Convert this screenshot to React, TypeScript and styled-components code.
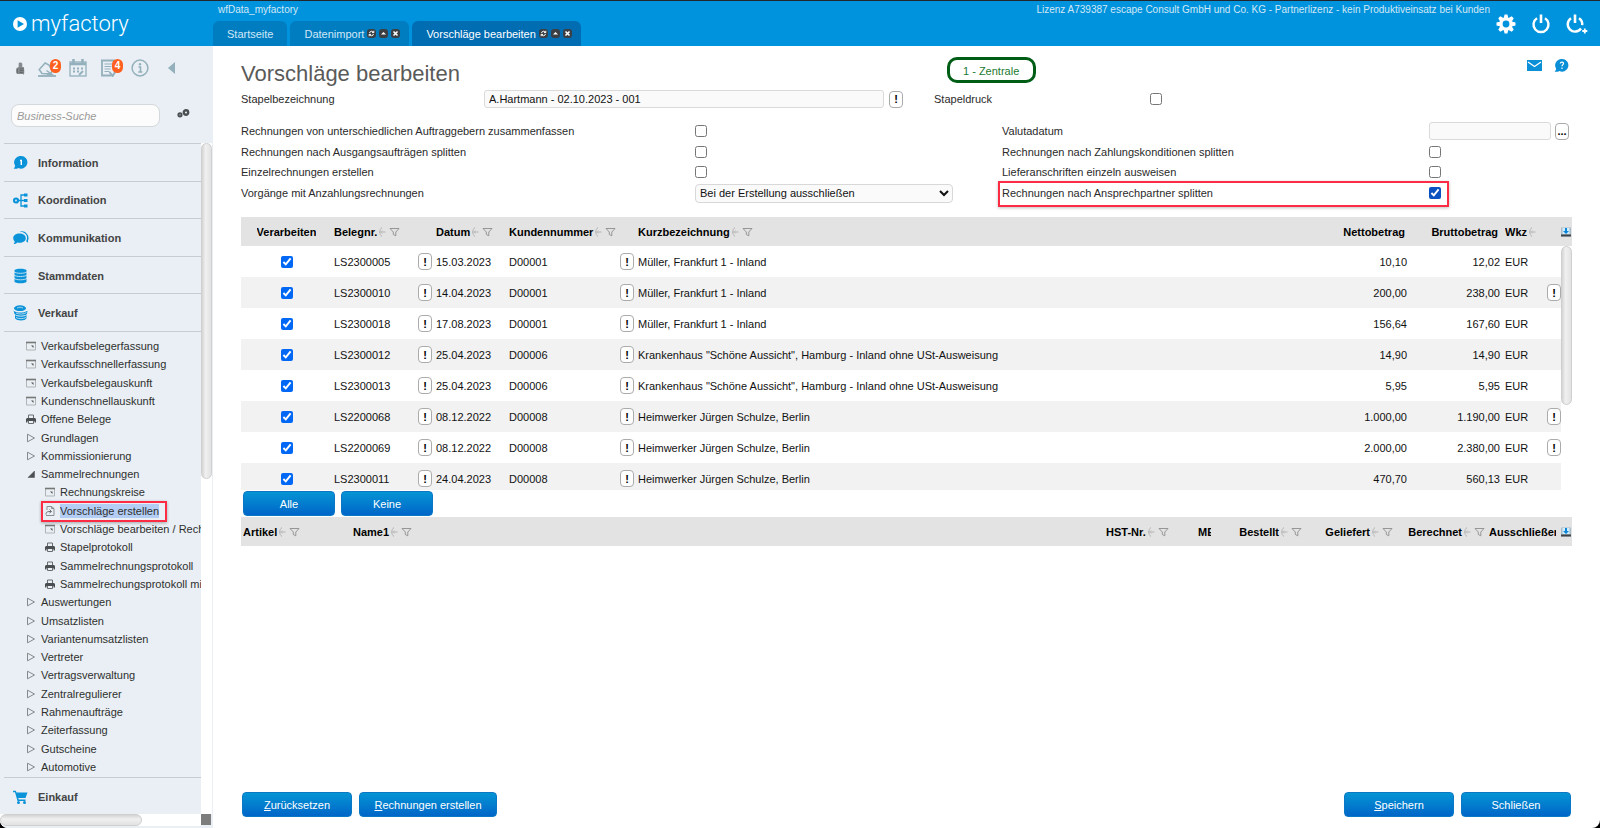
import React from "react";
import styled, { createGlobalStyle, css } from "styled-components";

const GlobalStyle = createGlobalStyle`
  *, *::before, *::after { box-sizing: border-box; }
  html, body { margin: 0; padding: 0; background: #000; }
  body, button, input, select {
    font-family: "Liberation Sans", Arial, Helvetica, sans-serif;
    font-size: 11px;
    line-height: 14px;
  }
  body { color: #2a2a2a; }
  button { cursor: pointer; }
`;

/* ---------- page frame ---------- */

const Page = styled.div`
  display: flex;
  flex-direction: column;
  height: 100vh;
  overflow: hidden;
  border-radius: 0 0 8px 8px;
  background: #fff;
`;

const Header = styled.header`
  display: flex;
  flex: none;
  height: 46px;
  border-top: 1px solid #23272b;
  background: #0093dd;
  color: #d3e8f6;
`;

const Logo = styled.a`
  display: flex;
  flex: none;
  align-items: center;
  gap: 4px;
  width: 213px;
  height: 45px;
  padding-left: 13px;
  color: #fff;
  text-decoration: none;
  font: 300 22px/26px Roboto, "Open Sans", sans-serif;
`;

const HeaderMain = styled.div`
  display: flex;
  flex: 1;
  flex-direction: column;
  justify-content: space-between;
`;

const HeaderLine = styled.div`
  display: flex;
  justify-content: space-between;
  padding: 2px 0 0 5px;
  font-size: 10px;
`;

const Tabs = styled.nav`
  display: flex;
  gap: 3px;
`;

const Tab = styled.a<{ $active?: boolean; $fixed?: boolean }>`
  display: flex;
  align-items: center;
  gap: 3px;
  height: 25px;
  padding: 0 ${(p) => (p.$fixed ? 14 : 9)}px 0 14px;
  border-radius: 6px 6px 0 0;
  background: ${(p) => (p.$active ? "#006cb2" : "#007dc1")};
  color: ${(p) => (p.$active ? "#fff" : "#d3e8f6")};
  text-decoration: none;
`;

const TabIcons = styled.span`
  display: flex;
  gap: 3px;
`;

const HeaderActions = styled.div`
  display: flex;
  flex: none;
  align-items: center;
  gap: 15px;
  padding: 1px 12px 0 6px;
`;

const IconButton = styled.button`
  display: flex;
  align-items: center;
  justify-content: center;
  padding: 0;
  border: 0;
  background: none;
  color: inherit;
`;

const Body = styled.div`
  display: flex;
  flex: 1;
  min-height: 0;
`;

/* ---------- sidebar ---------- */

const Sidebar = styled.aside`
  display: flex;
  flex: none;
  flex-direction: column;
  width: 213px;
  background: #e9eff4;
`;

const ToolRow = styled.div`
  display: flex;
  align-items: center;
  gap: 13px;
  height: 44px;
  padding-left: 15px;
  color: #93b0bc;
`;

const Tool = styled(IconButton)`
  position: relative;
`;

const CollapseTool = styled(Tool)`
  padding-left: 6px;
`;

const Badge = styled.span`
  position: absolute;
  top: 0;
  right: -5px;
  width: 11px;
  height: 14px;
  border-radius: 6px;
  background: #ff5f1f;
  color: #fff;
  font-size: 10px;
  font-weight: bold;
  line-height: 14px;
  text-align: center;
`;

const SearchRow = styled.div`
  display: flex;
  align-items: flex-start;
  gap: 17px;
  height: 53px;
  padding: 14px 0 0 11px;
  color: #4b4f52;
`;

const SearchOptions = styled(IconButton)`
  height: 18px;
`;

const SearchInput = styled.input`
  width: 149px;
  height: 23px;
  padding: 0 5px;
  border: 1px solid #d5d8da;
  border-radius: 8px;
  background: #fcfcfc;
  &::placeholder { color: #9a9a9a; font-style: italic; opacity: 1; }
`;

const ScrollRegion = styled.div`
  display: flex;
  flex: 1;
  min-height: 0;
`;

const MenuArea = styled.nav`
  width: 201px;
  padding-left: 4px;
  overflow: hidden;
`;

const MenuGroups = styled.div`
  display: grid;
  grid-auto-rows: 1fr;
  height: 188px;
`;

const MenuGroup = styled.a`
  display: grid;
  grid-template-columns: 16px auto;
  justify-content: start;
  align-items: center;
  gap: 9px;
  min-height: 37px;
  padding: 1px 0 0 9px;
  border-top: 1px solid #c8ccd0;
  color: #444;
  font-weight: bold;
  text-decoration: none;
  svg { color: #0b93da; }
`;

const Tree = styled.ul`
  display: grid;
  grid-auto-rows: 1fr;
  height: 446px;
  margin: 0;
  padding: 5px 0 1px;
  border-top: 1px solid #c8ccd0;
  list-style: none;
`;

const TreeItem = styled.li<{ $level: number; $marked?: boolean }>`
  position: relative;
  display: flex;
  align-items: center;
  padding-left: ${(p) => (p.$level === 2 ? 41 : 22)}px;
  white-space: nowrap;
  ${(p) =>
    p.$marked &&
    css`
      &::after {
        content: "";
        position: absolute;
        top: -1px;
        left: 37px;
        width: 126px;
        height: 21px;
        border: 2px solid #fb2c43;
        box-shadow: 0 1px 3px rgba(0, 0, 0, 0.3);
        pointer-events: none;
      }
    `}
`;

const TreeLink = styled.a<{ $selected?: boolean }>`
  display: flex;
  align-items: center;
  gap: 5px;
  color: #2f2f2f;
  text-decoration: none;
  span { background: ${(p) => (p.$selected ? "#b3cdf4" : "none")}; }
  svg { color: #6a6d70; }
`;

const Track = styled.div`
  width: 11px;
  background: #fff;
`;

const Thumb = styled.div<{ $horizontal?: boolean }>`
  width: ${(p) => (p.$horizontal ? "142px" : "11px")};
  height: ${(p) => (p.$horizontal ? "12px" : "50%")};
  border: 1px solid #cfcfcf;
  border-radius: 6px;
  background: ${(p) =>
    p.$horizontal
      ? "linear-gradient(#d4d4d4, #f0f0f0 40%, #e2e2e2)"
      : "linear-gradient(90deg, #d4d4d4, #f0f0f0 40%, #e2e2e2)"};
`;

const BottomTrack = styled.div`
  display: flex;
  justify-content: space-between;
  height: 14px;
  padding-right: 2px;
  background: linear-gradient(#fff, #fff) no-repeat 0 0 / 201px 12px;
`;

const TrackCorner = styled.div`
  width: 10px;
  height: 11px;
  background: #7d7d7d;
`;

/* ---------- main panel ---------- */

const Main = styled.main`
  display: flex;
  flex: 1;
  flex-direction: column;
  min-width: 0;
  padding: 11px 28px 11px;
`;

const TitleRow = styled.div`
  display: grid;
  grid-template-columns: 706px auto 1fr;
  height: 31px;
`;

const Title = styled.h1`
  margin: 3px 0 0;
  color: #5a5a5a;
  font-size: 22px;
  font-weight: normal;
  line-height: 28px;
`;

const SiteBadge = styled.span`
  height: 26px;
  padding: 1px 14px 0 13px;
  border: 3px solid #005d16;
  border-radius: 10px;
  color: #1c7a30;
  line-height: 20px;
`;

const TitleActions = styled.div`
  display: flex;
  gap: 12px;
  justify-content: flex-end;
  height: 17px;
  padding-right: 3px;
  color: #0b8fd6;
`;

const TopFields = styled.div`
  display: grid;
  grid-template-columns: 243px 400px 50px 216px 1fr;
  align-items: center;
  height: 22px;
`;

const Options = styled.div`
  display: grid;
  grid-template-columns: 454px 307px 427px 1fr;
  grid-template-rows: 22px 20px 20px 22px;
  align-items: center;
  margin: 10px 0 13px;
`;

const FieldButtonSlot = styled.div`
  display: flex;
  padding-left: 5px;
`;

const Inline = styled.div`
  display: flex;
  align-items: center;
  gap: 4px;
`;

const TextInput = styled.input`
  width: 100%;
  min-width: 0;
  height: 18px;
  padding: 0 4px;
  border: 1px solid #dadada;
  border-radius: 3px;
  background: #fafafa;
  color: #111;
`;

const DateInput = styled(TextInput)`
  width: 122px;
`;

const Select = styled.select`
  width: 258px;
  height: 19px;
  padding: 0;
  border: 1px solid #d8d8d8;
  border-radius: 4px;
  background: #fafafa;
  color: #111;
`;

const Check = styled.input<{ $hovered?: boolean }>`
  display: block;
  width: 12px;
  height: 12px;
  margin: 0;
  accent-color: ${(p) => (p.$hovered ? "#0a50c0" : "#0068f5")};
`;

const MarkFrame = styled.div`
  position: relative;
  display: grid;
  grid-column: 3 / 5;
  grid-template-columns: 427px 1fr;
  align-items: center;
  &::after {
    content: "";
    position: absolute;
    top: -5px;
    left: -4px;
    width: 451px;
    height: 26px;
    border: 2px solid #fb2c43;
    box-shadow: 0 1px 3px rgba(0, 0, 0, 0.25);
    pointer-events: none;
  }
`;

const SmallButton = styled.button`
  width: 14px;
  height: 17px;
  padding: 0;
  border: 1px solid #ababab;
  border-radius: 4px;
  background: #fff;
  color: #000;
  font-weight: bold;
  line-height: 14px;
  text-align: center;
  vertical-align: middle;
`;

/* ---------- tables ---------- */

const TableView = styled.div<{ $rows?: boolean }>`
  position: relative;
  flex: none;
  height: ${(p) => (p.$rows ? "273px" : "29px")};
  overflow: hidden;
`;

const Table = styled.table`
  width: 100%;
  border-collapse: collapse;
  table-layout: fixed;
  color: #111;
`;

const Th = styled.th<{ $align?: string; $right?: number }>`
  height: 29px;
  padding: 0 ${(p) => p.$right || 2}px 0 2px;
  overflow: hidden;
  background: #e3e3e3;
  color: #000;
  text-align: ${(p) => p.$align || "left"};
  white-space: nowrap;
`;

const IconCell = styled.td`
  padding: 0;
  background: #e3e3e3;
`;

const HeadLabel = styled.span`
  display: inline-flex;
  align-items: center;
  max-width: 100%;
  overflow: hidden;
  vertical-align: middle;
  svg { flex: none; }
`;

const Row = styled.tr`
  &:nth-child(even) td:not(:last-child) { background: #f2f2f2; }
`;

const Td = styled.td<{ $align?: string }>`
  height: 31px;
  padding: 0 ${(p) => (p.$align === "right" ? 3 : 2)}px 0 2px;
  text-align: ${(p) => p.$align || "left"};
  white-space: nowrap;
`;

const CheckCell = styled(Td)`
  input { margin: 0 auto; }
`;

const NoteCell = styled(Td)`
  padding: 0;
  text-align: right;
`;

const CellSplit = styled.div`
  display: flex;
  align-items: center;
  justify-content: space-between;
`;

const TableThumb = styled(Thumb)`
  position: absolute;
  top: 29px;
  right: 0;
  height: 159px;
`;

/* ---------- action buttons ---------- */

const ButtonBar = styled.div`
  display: flex;
  gap: 6px;
  padding: 1px 1px 1px 2px;
`;

const FooterBar = styled.div`
  display: flex;
  gap: 7px;
  margin-top: auto;
  padding: 0 1px;
`;

const Spacer = styled.span`
  flex: 1;
`;

const ActionButton = styled.button<{ $width: number }>`
  width: ${(p) => p.$width}px;
  height: 25px;
  padding: 0;
  border: 1px solid #0a78c4;
  border-radius: 4px;
  background: linear-gradient(#0594d4, #0066c8);
  color: #fff;
`;

/* ---------- icons ---------- */

const PlayLogo = () => (
  <svg width="14" height="14" viewBox="0 0 14 14" aria-hidden="true">
    <circle cx="7" cy="7" r="7" fill="#fff" />
    <path d="M4.6 3.2 11 7l-6.4 3.8z" fill="#0093dd" />
  </svg>
);

const TabIcon = ({ kind }: { kind: "reload" | "up" | "close" }) => (
  <svg width="9" height="9" viewBox="0 0 9 9" aria-hidden="true">
    <rect width="9" height="9" rx="3" fill="#3b3f43" />
    {kind === "reload" && (
      <path d="M6.6 3.4A2.2 2.2 0 0 0 2.5 4M2.4 5.6A2.2 2.2 0 0 0 6.5 5M6.800 1.800v1.800H5M2.200 7.200V5.400H4" stroke="#fff" fill="none" />
    )}
    {kind === "up" && <path d="M2 5.600h5L4.500 3z" fill="#fff" />}
    {kind === "close" && <path d="m2.500 2.500 4 4m0-4-4 4" stroke="#fff" strokeWidth="1.6" />}
  </svg>
);

const GearIcon = () => (
  <svg width="20" height="20" viewBox="0 0 20 20" aria-hidden="true">
    <g fill="#fff">
      {[0, 45, 90, 135].map((a) => (
        <path key={a} d="M8.600 .5h2.800l1.100 4v11l-1.100 4H8.600l-1.100-4v-11z" transform={`rotate(${a} 10 10)`} />
      ))}
      <circle cx="10" cy="10" r="6.500" />
    </g>
    <circle cx="10" cy="10" r="3.400" fill="#0093dd" />
  </svg>
);

const PowerIcon = ({ plus }: { plus?: boolean }) => (
  <svg width={plus ? 22 : 20} height="20" viewBox={plus ? "0 0 22 20" : "0 0 20 20"} fill="none" stroke="#fff" aria-hidden="true">
    <path d={plus ? "M5 4.200a7.300 7.300 0 1 0 10 10.300M13 4.200a7.300 7.300 0 0 1 3.200 7" : "M6 4.200a7.500 7.500 0 1 0 8 0"} strokeWidth="2.400" />
    <path d={plus ? "M9 .5v8.500" : "M10 .5v8.500"} strokeWidth="2.600" />
    {plus && <path d="M18.800 14.500v5M16.300 17h5" strokeWidth="1.800" />}
  </svg>
);

const ThumbUpIcon = () => (
  <svg width="10" height="14" viewBox="0 0 11 14" aria-hidden="true">
    <path d="M4 6V2.200C4 .4 8 .4 8 2.600V6h1.500c1 .4 1 12-.5 7.500H2.500C1 13.500 1 8 2 7z" fill="#858a8e" />
    <path d="M2.500 7.500v5M5 8h4.500M5 10h4.500M5 12h4" stroke="#5d6266" />
  </svg>
);

const StampIcon = () => (
  <svg width="18" height="18" viewBox="0 0 18 18" fill="none" stroke="currentColor" aria-hidden="true">
    <path d="M0 17h18" strokeWidth="1.800" />
    <path d="M4 14.500 1.200 10.500l6-6.500L11 6l3.500 6-2.500 3z" strokeWidth="1.500" />
    <path d="M8.500 11.500 14 15.500H9" strokeWidth="1.500" />
  </svg>
);

const CalendarIcon = () => (
  <svg width="18" height="18" viewBox="0 0 18 18" fill="none" stroke="currentColor" aria-hidden="true">
    <rect x="1" y="3" width="16" height="14" strokeWidth="1.300" />
    <path d="M1 5h16M4.500 0v5M13.500 0v5" strokeWidth="2.500" />
    <path d="M4 9.500h2M8 9.500h2M12 9.500h2M4 12.500h2M8 12.500h2" strokeWidth="1.800" />
    <path d="m10 16 4-4" strokeWidth="1.800" />
  </svg>
);

const TaskIcon = () => (
  <svg width="18" height="18" viewBox="0 0 18 18" fill="none" stroke="currentColor" aria-hidden="true">
    <path d="M2 1v15.500h9M1 1.500h13V10" strokeWidth="1.800" />
    <path d="M4.500 5h8M4.500 7.500h7M4.500 10h6M4.500 12.500h5" strokeWidth="1.200" />
    <path d="m9.500 13 3 4 4-6" strokeWidth="2" />
  </svg>
);

const InfoCircleIcon = () => (
  <svg width="18" height="18" viewBox="0 0 18 18" fill="none" stroke="currentColor" aria-hidden="true">
    <circle cx="9" cy="9" r="7.900" strokeWidth="1.500" />
    <path d="M7.500 8H9.500v5M7.300 13h4" strokeWidth="1.600" />
    <circle cx="9" cy="5.200" r="1.200" fill="currentColor" stroke="none" />
  </svg>
);

const CollapseIcon = () => (
  <svg width="7" height="12" viewBox="0 0 7 12" aria-hidden="true">
    <path d="M7 0v12L0 6z" fill="currentColor" />
  </svg>
);

const GearsIcon = () => (
  <svg width="13" height="9" viewBox="0 0 13 9" fill="none" stroke="currentColor" aria-hidden="true">
    <circle cx="9" cy="3.500" r="2.200" strokeWidth="2.400" />
    <circle cx="3" cy="5.800" r="1.600" strokeWidth="2" />
  </svg>
);

const InfoBubble = ({ help }: { help?: boolean }) => (
  <svg width="15" height="14" viewBox="0 0 15 14" aria-hidden="true">
    <path d="M8 0a6.300 6.300 0 1 1-2.600 12C4 13 2 13 .5 12.600c1-.8 1.500-1.600 1.600-3A6.300 6.300 0 0 1 8 0z" fill="currentColor" />
    {help ? (
      <path d="M6.300 4.500c.2-2 3.400-1.800 3.200 0C9.400 5.600 8 5.700 8 7.300M8 8.500V10" stroke="#fff" strokeWidth="1.200" fill="none" />
    ) : (
      <path d="M7 4.500h1.300V9" stroke="#fff" strokeWidth="1.400" fill="none" />
    )}
  </svg>
);

const OrgIcon = () => (
  <svg width="15" height="15" viewBox="0 0 15 15" fill="none" stroke="currentColor" aria-hidden="true">
    <circle cx="3" cy="7.500" r="2" strokeWidth="2.200" />
    <path d="M5 7.500h6M12 2H8v11h4" strokeWidth="1.300" />
    <path d="M11 2h3.500M11 7.500h3.500M11 13h3.500" strokeWidth="3.200" />
  </svg>
);

const ChatIcon = () => (
  <svg width="16" height="14" viewBox="0 0 16 14" fill="currentColor" aria-hidden="true">
    <path d="M6.500 2.500c3.600 0 6.300 2 6.300 4.700s-2.700 4.600-6.300 4.600c-.8 0-1.500-.1-2.200-.3-1 1-2.300 1.500-3.600 1.500.6-.7 1-1.500 1-2.500A4.400 4.400 0 0 1 .2 7.200c0-2.700 2.700-4.700 6.300-4.700z" />
    <path d="M6.500 1C11 .3 14.300 3.300 14 7.200c0 1.200-.5 2.200-1 3 1.200 1 1.800 1.200 2.300 1.300-.3-.6-.4-1-.4-1.600C17.500 4.600 11.500-2 6.500 1z" />
  </svg>
);

const DatabaseIcon = () => (
  <svg width="15" height="16" viewBox="0 0 15 16" aria-hidden="true">
    <path d="M1.500 2.500c0-2.300 12-2.300 12 0v11c0 2.400-12 2.400-12 0z" fill="currentColor" />
    <path d="M1 3.800c2 2 11 2 13 0M1 7c2 2 11 2 13 0M1 10.300c2 2 11 2 13 0" stroke="#e9eff4" strokeWidth=".8" fill="none" />
  </svg>
);

const CoinsIcon = () => (
  <svg width="15" height="16" viewBox="0 0 15 16" aria-hidden="true">
    <ellipse cx="7" cy="3.200" rx="6" ry="2.900" fill="currentColor" />
    <path d="M.5 5.500c2.500 2.600 10 2.800 14 .2L14 9c-2 2.200-10 2.300-12.500 0zM2 10c3 2 9 2 11.500 0v3.300c-1.500 3-9.500 3-11.500 0z" fill="currentColor" />
    <path d="M4 3.200c1-1.300 5-1.300 6 0M3 8c3 1.500 8 1.500 10.500-.5M3 12.500c3 1.500 7 1.500 10 0" stroke="#e9eff4" strokeWidth=".7" fill="none" />
  </svg>
);

const CartIcon = () => (
  <svg width="15" height="14" viewBox="0 0 15 14" aria-hidden="true">
    <path d="M0 .8h2.800l.7 1.700H14.500L12.500 8H5.200l.6 1.500h6.700V11H4.500L2 2.300H0z" fill="currentColor" />
    <circle cx="5.500" cy="12.500" r="1.500" fill="currentColor" />
    <circle cx="11.500" cy="12.500" r="1.500" fill="currentColor" />
  </svg>
);

const MailIcon = () => (
  <svg width="15" height="11" viewBox="0 0 15 11" aria-hidden="true">
    <rect width="15" height="11" fill="currentColor" />
    <path d="m1 2 6.500 4.500L14 2" stroke="#fff" strokeWidth="1.300" fill="none" />
  </svg>
);

type TreeKind = "form" | "print" | "closed" | "open" | "doc";

const TreeIcon = ({ kind }: { kind: TreeKind }) => (
  <svg width="10" height="10" viewBox="0 0 10 10" fill="none" stroke="currentColor" aria-hidden="true">
    {kind === "form" && (
      <>
        <path d="M.5 2v7h9V2" stroke="#b0b4b7" />
        <path d="M0 1.500h10" stroke="#777" strokeWidth="1.600" />
        <path d="M5 4.500h2.500V7z" fill="#555" stroke="none" />
      </>
    )}
    {kind === "print" && (
      <>
        <path d="M2.500 4V1h5v3" />
        <path d="M1 4h8l1 1v3.500H8.500V7h-7v1.500H0V5z" fill="#4c4f52" stroke="none" />
        <path d="M2.500 7v2.500h5V7" />
      </>
    )}
    {kind === "closed" && <path d="M1.500 1.200v7.600L8.500 5z" stroke="#85898c" />}
    {kind === "open" && <path d="M8.500 2V8.500H2z" fill="#4c4f52" stroke="#4c4f52" strokeWidth=".5" />}
    {kind === "doc" && (
      <>
        <path d="M2 4V.5h4.500l2.500 2v7H1M6.500.5v2H9" stroke="#8b8f92" />
        <path d="M1 8.500c0-3 2-3 5-3M4.500 3.500l2 2-2 1.500" />
      </>
    )}
  </svg>
);

const SortFilter = ({ part }: { part?: boolean }) => (
  <svg width={part ? 14 : 23} height="11" viewBox={part ? "0 0 14 11" : "0 0 23 11"} fill="none" aria-hidden="true">
    <path d="M5 .5C2 2.500 2 7.500 5 9.500M2.500 5h6" stroke="#b4b4b4" />
    <path d="M3 5 5.500 3v4z" fill="#c4c4c4" />
    {part ? (
      <path d="M12 1.500h1.500" stroke="#999" />
    ) : (
      <path d="M13 1.500h9L18.800 5v3.800l-2.500-1.300V5z" stroke="#969696" />
    )}
  </svg>
);

const ExportIcon = () => (
  <svg width="10" height="10" viewBox="0 0 10 10" aria-hidden="true">
    <rect y=".5" width="10" height="9" fill="#a9bcc8" />
    <path d="M0 7.500h10v2H0z" fill="#3e4448" />
    <path d="M1.500 1h7v6h-7z" fill="#d5edf9" />
    <path d="M4 1h2v3h2L5 7 2 4h2z" fill="#0a86d8" />
  </svg>
);

/* ---------- data ---------- */

const groups = [
  { label: "Information", icon: <InfoBubble /> },
  { label: "Koordination", icon: <OrgIcon /> },
  { label: "Kommunikation", icon: <ChatIcon /> },
  { label: "Stammdaten", icon: <DatabaseIcon /> },
  { label: "Verkauf", icon: <CoinsIcon /> },
];

const tree: { label: string; kind: TreeKind; level?: number; selected?: boolean }[] = [
  { label: "Verkaufsbelegerfassung", kind: "form" },
  { label: "Verkaufsschnellerfassung", kind: "form" },
  { label: "Verkaufsbelegauskunft", kind: "form" },
  { label: "Kundenschnellauskunft", kind: "form" },
  { label: "Offene Belege", kind: "print" },
  { label: "Grundlagen", kind: "closed" },
  { label: "Kommissionierung", kind: "closed" },
  { label: "Sammelrechnungen", kind: "open" },
  { label: "Rechnungskreise", kind: "form", level: 2 },
  { label: "Vorschläge erstellen", kind: "doc", level: 2, selected: true },
  { label: "Vorschläge bearbeiten / Rechnungen", kind: "form", level: 2 },
  { label: "Stapelprotokoll", kind: "print", level: 2 },
  { label: "Sammelrechnungsprotokoll", kind: "print", level: 2 },
  { label: "Sammelrechungsprotokoll mit", kind: "print", level: 2 },
  { label: "Auswertungen", kind: "closed" },
  { label: "Umsatzlisten", kind: "closed" },
  { label: "Variantenumsatzlisten", kind: "closed" },
  { label: "Vertreter", kind: "closed" },
  { label: "Vertragsverwaltung", kind: "closed" },
  { label: "Zentralregulierer", kind: "closed" },
  { label: "Rahmenaufträge", kind: "closed" },
  { label: "Zeiterfassung", kind: "closed" },
  { label: "Gutscheine", kind: "closed" },
  { label: "Automotive", kind: "closed" },
];

const records = [
  { nr: "LS2300005", date: "15.03.2023", customer: "D00001", name: "Müller, Frankfurt 1 - Inland", net: "10,10", gross: "12,02" },
  { nr: "LS2300010", date: "14.04.2023", customer: "D00001", name: "Müller, Frankfurt 1 - Inland", net: "200,00", gross: "238,00", note: true },
  { nr: "LS2300018", date: "17.08.2023", customer: "D00001", name: "Müller, Frankfurt 1 - Inland", net: "156,64", gross: "167,60" },
  { nr: "LS2300012", date: "25.04.2023", customer: "D00006", name: 'Krankenhaus "Schöne Aussicht", Hamburg - Inland ohne USt-Ausweisung', net: "14,90", gross: "14,90" },
  { nr: "LS2300013", date: "25.04.2023", customer: "D00006", name: 'Krankenhaus "Schöne Aussicht", Hamburg - Inland ohne USt-Ausweisung', net: "5,95", gross: "5,95" },
  { nr: "LS2200068", date: "08.12.2022", customer: "D00008", name: "Heimwerker Jürgen Schulze, Berlin", net: "1.000,00", gross: "1.190,00", note: true },
  { nr: "LS2200069", date: "08.12.2022", customer: "D00008", name: "Heimwerker Jürgen Schulze, Berlin", net: "2.000,00", gross: "2.380,00", note: true },
  { nr: "LS2300011", date: "24.04.2023", customer: "D00008", name: "Heimwerker Jürgen Schulze, Berlin", net: "470,70", gross: "560,13" },
];

const Columns = ({ widths }: { widths: (number | undefined)[] }) => (
  <colgroup>
    {widths.map((w, i) => (
      <col key={i} width={w} />
    ))}
  </colgroup>
);

type HeadCellProps = { label: string; align?: string; sort?: "full" | "part" };

const HeadCell = ({ label, align, sort }: HeadCellProps) => (
  <Th $align={align} $right={align === "right" && !sort ? 5 : 2} scope="col">
    <HeadLabel>
      {label}
      {sort && <SortFilter part={sort === "part"} />}
    </HeadLabel>
  </Th>
);

const ExportCell = () => (
  <IconCell>
    <IconButton aria-label="Exportieren"><ExportIcon /></IconButton>
  </IconCell>
);

/* ---------- sections ---------- */

const TabControls = () => (
  <TabIcons>
    <TabIcon kind="reload" />
    <TabIcon kind="up" />
    <TabIcon kind="close" />
  </TabIcons>
);

const AppHeader = () => (
  <Header>
    <Logo href="#"><PlayLogo />myfactory</Logo>
    <HeaderMain>
      <HeaderLine>
        <span>wfData_myfactory</span>
        <span>Lizenz A739387 escape Consult GmbH und Co. KG - Partnerlizenz - kein Produktiveinsatz bei Kunden</span>
      </HeaderLine>
      <Tabs>
        <Tab href="#" $fixed>Startseite</Tab>
        <Tab href="#">Datenimport<TabControls /></Tab>
        <Tab href="#" $active>Vorschläge bearbeiten<TabControls /></Tab>
      </Tabs>
    </HeaderMain>
    <HeaderActions>
      <IconButton aria-label="Einstellungen"><GearIcon /></IconButton>
      <IconButton aria-label="Abmelden"><PowerIcon /></IconButton>
      <IconButton aria-label="Neu anmelden"><PowerIcon plus /></IconButton>
    </HeaderActions>
  </Header>
);

const AppSidebar = () => (
  <Sidebar>
    <ToolRow>
      <Tool aria-label="Bewerten"><ThumbUpIcon /></Tool>
      <Tool aria-label="Stempel"><StampIcon /><Badge>2</Badge></Tool>
      <Tool aria-label="Kalender"><CalendarIcon /></Tool>
      <Tool aria-label="Aufgaben"><TaskIcon /><Badge>4</Badge></Tool>
      <Tool aria-label="Info"><InfoCircleIcon /></Tool>
      <CollapseTool aria-label="Einklappen"><CollapseIcon /></CollapseTool>
    </ToolRow>
    <SearchRow>
      <SearchInput placeholder="Business-Suche" aria-label="Business-Suche" />
      <SearchOptions aria-label="Suchoptionen"><GearsIcon /></SearchOptions>
    </SearchRow>
    <ScrollRegion>
      <MenuArea>
        <MenuGroups>
          {groups.map((g) => (
            <MenuGroup href="#" key={g.label}>{g.icon}<span>{g.label}</span></MenuGroup>
          ))}
        </MenuGroups>
        <Tree>
          {tree.map((t) => (
            <TreeItem key={t.label} $level={t.level || 1} $marked={t.selected}>
              <TreeLink href="#" $selected={t.selected}>
                <TreeIcon kind={t.kind} />
                <span>{t.label}</span>
              </TreeLink>
            </TreeItem>
          ))}
        </Tree>
        <MenuGroup href="#"><CartIcon /><span>Einkauf</span></MenuGroup>
      </MenuArea>
      <Track><Thumb /></Track>
    </ScrollRegion>
    <BottomTrack><Thumb $horizontal /><TrackCorner /></BottomTrack>
  </Sidebar>
);

const RecordTable = () => (
  <TableView $rows>
    <Table>
      <Columns widths={[91, 102, 73, 129, undefined, 91, 93, 38, 20, 11]} />
      <thead>
        <tr>
          <HeadCell label="Verarbeiten" align="center" />
          <HeadCell label="Belegnr." sort="full" />
          <HeadCell label="Datum" sort="full" />
          <HeadCell label="Kundennummer" sort="full" />
          <HeadCell label="Kurzbezeichnung" sort="full" />
          <HeadCell label="Nettobetrag" align="right" />
          <HeadCell label="Bruttobetrag" align="right" />
          <HeadCell label="Wkz" sort="part" />
          <IconCell />
          <ExportCell />
        </tr>
      </thead>
      <tbody>
        {records.map((r) => (
          <Row key={r.nr}>
            <CheckCell><Check type="checkbox" defaultChecked aria-label={`${r.nr} verarbeiten`} /></CheckCell>
            <Td><CellSplit>{r.nr}<SmallButton aria-label="Beleg anzeigen">!</SmallButton></CellSplit></Td>
            <Td>{r.date}</Td>
            <Td><CellSplit>{r.customer}<SmallButton aria-label="Kunde anzeigen">!</SmallButton></CellSplit></Td>
            <Td>{r.name}</Td>
            <Td $align="right">{r.net}</Td>
            <Td $align="right">{r.gross}</Td>
            <Td>EUR</Td>
            <NoteCell>{r.note && <SmallButton aria-label="Hinweis anzeigen">!</SmallButton>}</NoteCell>
            <Td />
          </Row>
        ))}
      </tbody>
    </Table>
    <TableThumb />
  </TableView>
);

const ArticleTable = () => (
  <TableView>
    <Table>
      <Columns widths={[110, undefined, 92, 17, 91, 91, 92, 74, 11]} />
      <thead>
        <tr>
          <HeadCell label="Artikel" sort="full" />
          <HeadCell label="Name1" sort="full" />
          <HeadCell label="HST-Nr." sort="full" />
          <HeadCell label="ME" />
          <HeadCell label="Bestellt" align="right" sort="full" />
          <HeadCell label="Geliefert" align="right" sort="full" />
          <HeadCell label="Berechnet" align="right" sort="full" />
          <HeadCell label="Ausschließen" align="right" sort={undefined} />
          <ExportCell />
        </tr>
      </thead>
    </Table>
  </TableView>
);

export default function App() {
  return (
    <Page>
      <GlobalStyle />
      <AppHeader />
      <Body>
        <AppSidebar />
        <Main>
          <TitleRow>
            <Title>Vorschläge bearbeiten</Title>
            <SiteBadge>1 - Zentrale</SiteBadge>
            <TitleActions>
              <IconButton aria-label="E-Mail"><MailIcon /></IconButton>
              <IconButton aria-label="Hilfe"><InfoBubble help /></IconButton>
            </TitleActions>
          </TitleRow>

          <TopFields>
            <label htmlFor="stapel">Stapelbezeichnung</label>
            <TextInput id="stapel" defaultValue="A.Hartmann - 02.10.2023 - 001" />
            <FieldButtonSlot><SmallButton aria-label="Stapel anzeigen">!</SmallButton></FieldButtonSlot>
            <label htmlFor="druck">Stapeldruck</label>
            <Check id="druck" type="checkbox" />
          </TopFields>

          <Options>
            <label htmlFor="zusammen">Rechnungen von unterschiedlichen Auftraggebern zusammenfassen</label>
            <Check id="zusammen" type="checkbox" />
            <label htmlFor="valuta">Valutadatum</label>
            <Inline>
              <DateInput id="valuta" />
              <SmallButton aria-label="Datum wählen">...</SmallButton>
            </Inline>

            <label htmlFor="ausgang">Rechnungen nach Ausgangsaufträgen splitten</label>
            <Check id="ausgang" type="checkbox" />
            <label htmlFor="zahlung">Rechnungen nach Zahlungskonditionen splitten</label>
            <Check id="zahlung" type="checkbox" />

            <label htmlFor="einzel">Einzelrechnungen erstellen</label>
            <Check id="einzel" type="checkbox" />
            <label htmlFor="liefer">Lieferanschriften einzeln ausweisen</label>
            <Check id="liefer" type="checkbox" />

            <label htmlFor="anzahlung">Vorgänge mit Anzahlungsrechnungen</label>
            <Select id="anzahlung" defaultValue="aus">
              <option value="aus">Bei der Erstellung ausschließen</option>
            </Select>
            <MarkFrame>
              <label htmlFor="partner">Rechnungen nach Ansprechpartner splitten</label>
              <Check id="partner" type="checkbox" defaultChecked $hovered />
            </MarkFrame>
          </Options>

          <RecordTable />
          <ButtonBar>
            <ActionButton $width={92}>Alle</ActionButton>
            <ActionButton $width={92}>Keine</ActionButton>
          </ButtonBar>
          <ArticleTable />

          <FooterBar>
            <ActionButton $width={110}><u>Z</u>urücksetzen</ActionButton>
            <ActionButton $width={138}><u>R</u>echnungen erstellen</ActionButton>
            <Spacer />
            <ActionButton $width={110}><u>S</u>peichern</ActionButton>
            <ActionButton $width={110}>Schließen</ActionButton>
          </FooterBar>
        </Main>
      </Body>
    </Page>
  );
}
